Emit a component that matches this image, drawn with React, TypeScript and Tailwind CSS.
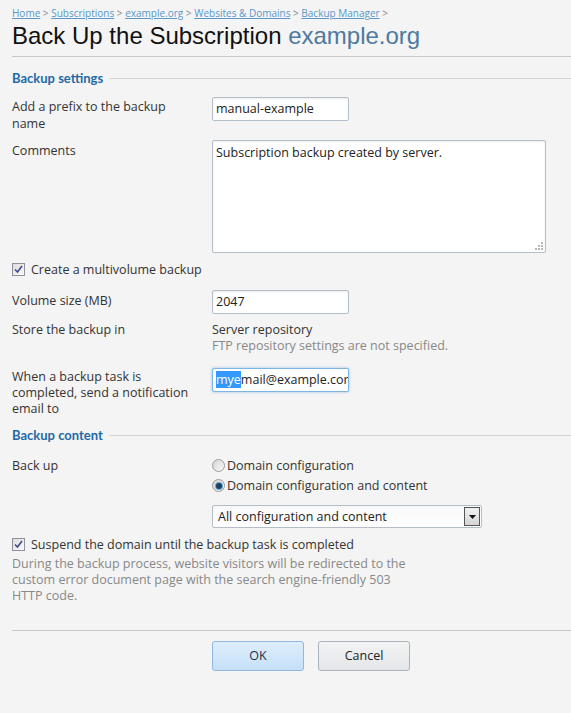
import React from "react";

const FONT = "font-['Open_Sans','DejaVu_Sans',sans-serif]";

function Check() {
  return (
    <span className="relative inline-flex h-[13px] w-[13px] shrink-0 items-center justify-center border border-[#8f8f9d] bg-gradient-to-br from-[#dcdcdc] to-[#fbfbfb]">
      <svg width="9" height="9" viewBox="0 0 9 9" className="block">
        <path d="M1 4.5 L3.5 7 L8 1" fill="none" stroke="#3d4a8a" strokeWidth="1.6" />
      </svg>
    </span>
  );
}

function Radio({ on }: { on?: boolean }) {
  return (
    <span className="relative inline-flex h-[13px] w-[13px] shrink-0 items-center justify-center rounded-full border border-[#9a9a9a] bg-gradient-to-br from-[#d4d4d4] to-[#fafafa]">
      {on && <span className="h-[6px] w-[6px] rounded-full bg-[#1d3f66] shadow-[0_0_0_1px_#6aa8d8]" />}
    </span>
  );
}

function SectionHead({ children }: { children: React.ReactNode }) {
  return (
    <div className="flex items-center gap-[6px] font-['Lato',sans-serif] text-[13px] font-bold leading-[17px] text-[#1f6aa5]">
      <span>{children}</span>
      <span className="h-px flex-1 bg-[#d4d4d4]" />
    </div>
  );
}

const inputCls =
  "h-[24px] w-[137px] rounded-[2px] border border-[#b5bec8] bg-white px-[3px] leading-[22px] text-[#222] shadow-[inset_0_1px_2px_rgba(0,0,0,0.08)]";

export default function App() {
  return (
    <div className={`min-h-[713px] bg-[#f4f4f4] pl-3 text-[12.5px] text-[#333] ${FONT}`}>
      <div className="pt-[6px] text-[10px] leading-[14px] text-[#888]">
        <a className="text-[#5a98c8] underline">Home</a> &gt;{" "}
        <a className="text-[#5a98c8] underline">Subscriptions</a> &gt;{" "}
        <a className="text-[#5a98c8] underline">example.org</a> &gt;{" "}
        <a className="text-[#5a98c8] underline">Websites &amp; Domains</a> &gt;{" "}
        <a className="text-[#5a98c8] underline">Backup Manager</a> &gt;
      </div>
      <h1 className="mt-[1px] font-['Liberation_Sans',Arial,sans-serif] text-[24px] leading-[30px] text-[#111]">
        Back Up the Subscription <span className="text-[#4d7a9e]">example.org</span>
      </h1>
      <div className="mt-[5px] h-px bg-[#c8c8c8]" />

      <div className="mt-[13px]">
        <SectionHead>Backup settings</SectionHead>
      </div>

      {/* prefix */}
      <div className="mt-[10px] flex">
        <div className="w-[200px] pt-[1px] leading-[17px]">
          Add a prefix to the backup
          <br />
          name
        </div>
        <div className={inputCls}>manual-example</div>
      </div>

      {/* comments */}
      <div className="mt-[8px] flex">
        <div className="w-[200px] pt-[2px] leading-[17px]">Comments</div>
        <div className="relative h-[113px] w-[334px] rounded-[2px] border border-[#b5bec8] bg-white px-[3px] pt-[3px] leading-[17px] text-[#222] shadow-[inset_0_1px_2px_rgba(0,0,0,0.08)]">
          Subscription backup created by server.
          <svg className="absolute bottom-[2px] right-[2px]" width="8" height="8" viewBox="0 0 8 8">
            <rect x="6" y="0" width="2" height="2" fill="#b8b8b8" />
            <rect x="3" y="3" width="2" height="2" fill="#b8b8b8" />
            <rect x="6" y="3" width="2" height="2" fill="#b8b8b8" />
            <rect x="0" y="6" width="2" height="2" fill="#b8b8b8" />
            <rect x="3" y="6" width="2" height="2" fill="#b8b8b8" />
            <rect x="6" y="6" width="2" height="2" fill="#b8b8b8" />
          </svg>
        </div>
      </div>

      <div className="mt-[8px] flex items-center gap-[6px] leading-[17px]">
        <Check />
        <span>Create a multivolume backup</span>
      </div>

      {/* volume */}
      <div className="mt-[12px] flex">
        <div className="w-[200px] pt-[2px] leading-[17px]">Volume size (MB)</div>
        <div className={inputCls}>2047</div>
      </div>

      {/* store */}
      <div className="mt-[8px] flex leading-[16px]">
        <div className="w-[200px]">Store the backup in</div>
        <div>
          <div>Server repository</div>
          <div className="text-[#888]">FTP repository settings are not specified.</div>
        </div>
      </div>

      {/* notification */}
      <div className="mt-[14px] flex">
        <div className="w-[200px] pt-[1px] leading-[16px]">
          When a backup task is
          <br />
          completed, send a notification
          <br />
          email to
        </div>
        <div className="h-[24px] w-[137px] overflow-hidden whitespace-nowrap rounded-[2px] border border-[#7eb4e2] bg-white px-[3px] leading-[22px] text-[#222] shadow-[0_0_3px_rgba(90,160,220,0.6)]">
          <span className="bg-[#3399ff] text-white">mye</span>mail@example.cor
        </div>
      </div>

      <div className="mt-[10px]">
        <SectionHead>Backup content</SectionHead>
      </div>

      <div className="mt-[13px] flex leading-[17px]">
        <div className="w-[200px]">Back up</div>
        <div>
          <div className="flex items-center gap-[2px]">
            <Radio />
            <span>Domain configuration</span>
          </div>
          <div className="mt-[3px] flex items-center gap-[2px]">
            <Radio on />
            <span>Domain configuration and content</span>
          </div>
          <div className="mt-[11px] flex h-[23px] w-[270px] items-center justify-between rounded-[2px] border border-[#b5bec8] bg-gradient-to-b from-[#f8f8f8] to-white pl-[5px] text-[#222]">
            <span>All configuration and content</span>
            <span className="mr-[1px] flex h-[19px] w-[16px] items-center justify-center border border-[#555] bg-gradient-to-b from-[#f2f2f2] to-[#d4d4d4]">
              <svg width="7" height="4" viewBox="0 0 7 4">
                <path d="M0 0 H7 L3.5 4 Z" fill="#111" />
              </svg>
            </span>
          </div>
        </div>
      </div>

      <div className="mt-[8px] flex items-center gap-[6px] leading-[17px]">
        <Check />
        <span>Suspend the domain until the backup task is completed</span>
      </div>
      <div className="mt-[3px] leading-[16px] text-[#888]">
        During the backup process, website visitors will be redirected to the
        <br />
        custom error document page with the search engine-friendly 503
        <br />
        HTTP code.
      </div>

      <div className="mt-[26px] h-px bg-[#c8c8c8]" />

      <div className="mt-[10px] flex gap-[14px] pl-[200px]">
        <button className="h-[30px] w-[92px] rounded-[3px] border border-[#8fb8dc] bg-gradient-to-b from-[#ddeefc] to-[#c6e0f8] text-[12.5px] text-[#1e3148]">
          OK
        </button>
        <button className="h-[30px] w-[92px] rounded-[3px] border border-[#aab2ba] bg-gradient-to-b from-[#f3f3f3] to-[#e3e6e9] text-[12.5px] text-[#222]">
          Cancel
        </button>
      </div>
    </div>
  );
}
